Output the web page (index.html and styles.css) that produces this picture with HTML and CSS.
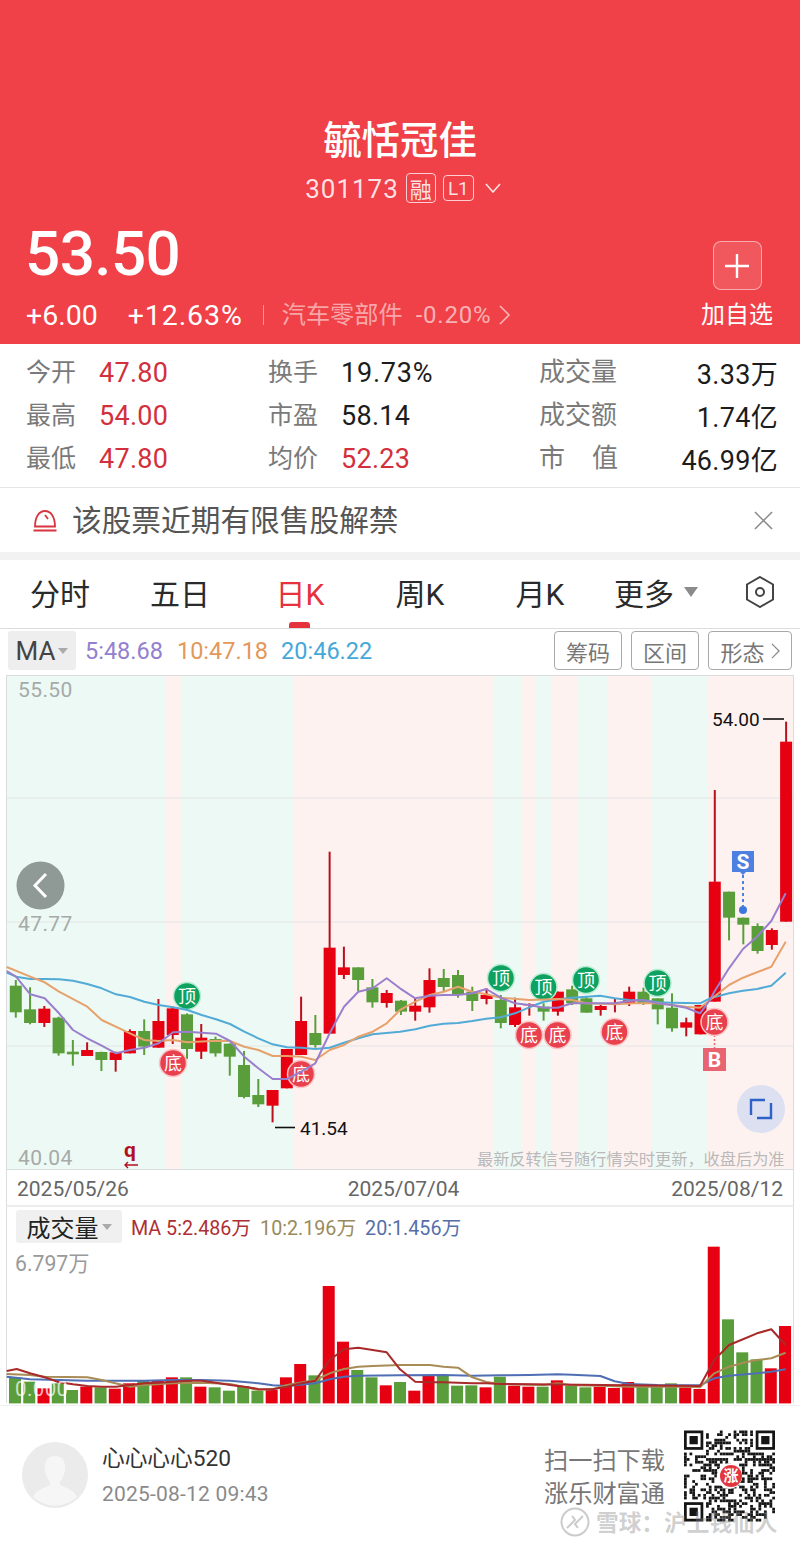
FILE: index.html
```html
<!DOCTYPE html>
<html lang="zh-CN">
<head>
<meta charset="utf-8">
<title>毓恬冠佳</title>
<link rel="stylesheet" href="styles.css">
</head>
<body>
<div class="page">
  <header class="header">
    <h1 class="title">毓恬冠佳</h1>
    <div class="code-row">
      <span class="code">301173</span>
      <span class="badge badge-tall">融</span>
      <span class="badge">L1</span>
      <svg class="code-chevron" viewBox="0 0 16 10"><path d="M1 1l7 8 7-8"/></svg>
    </div>
    <div class="quote">
      <div class="quote-main">
        <div class="price">53.50</div>
        <div class="change-row">
          <span class="change">+6.00</span>
          <span class="change change-pct">+12.63%</span>
          <span class="divider"></span>
          <span class="sector">汽车零部件</span>
          <span class="sector-pct">-0.20%</span>
          <svg class="sector-chevron" viewBox="0 0 12 20"><path d="M1 1l9 9-9 9"/></svg>
        </div>
      </div>
      <div class="watch">
        <div class="watch-btn"><svg viewBox="0 0 24 24"><path d="M12 0v24M0 12h24"/></svg></div>
        <div class="watch-label">加自选</div>
      </div>
    </div>
  </header>

  <section class="stats">
    <div class="stat stat-a"><span class="stat-label">今开</span><span class="stat-val up">47.80</span></div>
    <div class="stat stat-b"><span class="stat-label">换手</span><span class="stat-val stat-wide">19.73%</span></div>
    <div class="stat stat-c"><span class="stat-label">成交量</span><span class="stat-val">3.33万</span></div>
    <div class="stat stat-a"><span class="stat-label">最高</span><span class="stat-val up">54.00</span></div>
    <div class="stat stat-b"><span class="stat-label">市盈</span><span class="stat-val">58.14</span></div>
    <div class="stat stat-c"><span class="stat-label">成交额</span><span class="stat-val">1.74亿</span></div>
    <div class="stat stat-a"><span class="stat-label">最低</span><span class="stat-val up">47.80</span></div>
    <div class="stat stat-b"><span class="stat-label">均价</span><span class="stat-val up">52.23</span></div>
    <div class="stat stat-c"><span class="stat-label stat-spread"><span>市</span><span>值</span></span><span class="stat-val">46.99亿</span></div>
  </section>

  <section class="notice">
    <svg class="notice-icon" viewBox="0 0 24 24"><path d="M2 18.5C2 9 6 3 12 3s10 6 10 15.500zM12 7l3 4M0.500 22.500h23"/></svg>
    <span class="notice-text">该股票近期有限售股解禁</span>
    <svg class="notice-close" viewBox="0 0 20 20"><path d="M1 1l18 18M19 1L1 19"/></svg>
  </section>

  <nav class="tabs">
    <span class="tab">分时</span>
    <span class="tab">五日</span>
    <span class="tab tab-active">日K</span>
    <span class="tab">周K</span>
    <span class="tab">月K</span>
    <span class="tab tab-more">更多<i class="tab-caret"></i></span>
    <span class="tab"><svg class="hex" viewBox="0 0 30 32"><path d="M15 1l13 7.500v15L15 31 2 23.500v-15z"/><circle cx="15" cy="16" r="4"/></svg></span>
  </nav>

  <div class="ma-row">
    <span class="ma-select">MA<i class="caret"></i></span>
    <span class="ma ma5">5:48.68</span>
    <span class="ma ma10">10:47.18</span>
    <span class="ma ma20">20:46.22</span>
    <span class="ma-tools">
      <span class="tool">筹码</span>
      <span class="tool">区间</span>
      <span class="tool tool-wide">形态<svg class="tool-chevron" viewBox="0 0 10 18"><path d="M1 1l8 8-8 8"/></svg></span>
    </span>
  </div>

  <svg id="kline" class="kline" width="800" height="495" viewBox="0 0 800 495"></svg>

  <div class="dates"><span>2025/05/26</span><span class="date-mid">2025/07/04</span><span>2025/08/12</span></div>

  <section class="volume">
    <svg id="vol" class="vol-chart" width="800" height="198" viewBox="0 0 800 198"></svg>
    <div class="vol-head">
      <span class="vol-select">成交量<i class="caret"></i></span>
      <span class="vma vma5">MA 5:2.486万</span>
      <span class="vma vma10">10:2.196万</span>
      <span class="vma vma20">20:1.456万</span>
    </div>
    <div class="vol-max">6.797万</div>
    <div class="vol-min">0.000</div>
  </section>

  <footer class="footer">
    <svg class="avatar" viewBox="0 0 68 68">
      <circle class="avatar-bg" cx="34" cy="33" r="33"/>
      <path class="avatar-fg" d="M34 14c8 0 11 6 10 14-1 6-3 10-5 12v3c6 3 14 5 17 12A33 33 0 0 1 12 55c3-7 11-9 17-12v-3c-2-2-4-6-5-12-1-8 2-14 10-14z"/>
    </svg>
    <div class="user">
      <div class="user-name">心心心心520</div>
      <div class="user-time">2025-08-12 09:43</div>
    </div>
    <div class="download"><div>扫一扫下载</div><div>涨乐财富通</div></div>
    <div class="qr">
      <svg id="qr" class="qr-code" width="91" height="92" viewBox="0 0 33 33"></svg>
      <span class="qr-logo">涨</span>
    </div>
    <div class="watermark">
      <svg class="wm-logo" viewBox="0 0 30 30"><circle cx="15" cy="15" r="13.500"/><path d="M7 21l8-8-3-4M23 9l-8 8 3 4"/></svg>
      <span>雪球：沪上钱仙人</span>
    </div>
  </footer>
</div>
<script src="chart.js"></script>
</body>
</html>
```
FILE: styles.css
```css
* { box-sizing: border-box; }
html, body { margin: 0; padding: 0; background: #fff; }
body { font-family: Roboto, "Noto Sans CJK SC", sans-serif; color: #222; }
.page { width: 800px; height: 1547px; overflow: hidden; }

/* header */
.header { height: 344px; background: #ef4147; color: #fff; padding-top: 116px; }
.title { margin: 0; text-align: center; font-size: 38.4px; line-height: 50px; font-weight: 500; }
.code-row { display: flex; align-items: center; justify-content: center; height: 32px; margin-top: 6px; padding-left: 6px; }
.code { font-size: 26px; letter-spacing: 1px; color: rgba(255,255,255,.85); margin-right: 7px; padding-top: 2px; }
.badge { display: flex; align-items: center; justify-content: center; width: 31px; height: 26px; border: 1px solid rgba(255,255,255,.75); border-radius: 4px; font-size: 19px; color: rgba(255,255,255,.85); margin-right: 7px; }
.badge-tall { width: 30px; height: 30px; font-size: 22px; }
.code-chevron { width: 16px; height: 10px; margin-left: 4px; fill: none; stroke: rgba(255,255,255,.85); stroke-width: 1.6; }
.quote { display: flex; justify-content: space-between; align-items: flex-end; margin-top: 20px; padding: 0 27px 0 26px; }
.price { font-size: 62px; line-height: 60px; font-weight: 500; letter-spacing: -.6px; margin-left: -1px; }
.change-row { display: flex; align-items: center; height: 32px; margin-top: 15px; }
.change { font-size: 28.5px; margin-right: 30px; }
.change-pct { margin-right: 20px; letter-spacing: .9px; }
.divider { width: 1px; height: 20px; background: rgba(255,255,255,.45); margin-right: 18px; }
.sector { font-size: 24.2px; color: rgba(255,255,255,.55); margin-right: 13px; padding-bottom: 5px; }
.sector-pct { font-size: 24px; color: rgba(255,255,255,.6); margin-right: 8px; letter-spacing: .8px; }
.sector-chevron { width: 12px; height: 20px; fill: none; stroke: rgba(255,255,255,.6); stroke-width: 1.6; }
.watch { display: flex; flex-direction: column; align-items: center; width: 72px; }
.watch-btn { display: flex; align-items: center; justify-content: center; width: 49px; height: 49px; border: 1px solid rgba(255,255,255,.5); border-radius: 8px; background: rgba(255,255,255,.12); }
.watch-btn svg { width: 24px; height: 24px; fill: none; stroke: #fff; stroke-width: 2.4; }
.watch-label { font-size: 24px; line-height: 32px; margin-top: 9px; color: #fff; }

/* stats */
.stats { height: 144px; padding: 7px 22px 0 26px; display: grid; grid-template-columns: 242px 271px 1fr; grid-auto-rows: 43px; border-bottom: 1px solid #e4e4e4; }
.stat { display: flex; align-items: center; }
.stat-label { font-size: 25px; color: #7a7a7a; padding-bottom: 6px; }
.stat-val { font-size: 27px; color: #1c1c1c; letter-spacing: .3px; }
.stat-val.up { color: #d2303c; }
.stat-wide { letter-spacing: .8px; }
.stat-a .stat-label { width: 73px; }
.stat-b .stat-label { width: 73px; }
.stat-c { justify-content: space-between; }
.stat-c .stat-label { font-size: 26px; width: 79px; }
.stat-spread { display: flex; justify-content: space-between; }

/* notice */
.notice { display: flex; align-items: center; height: 72px; padding: 0 27px 0 33px; border-bottom: 8px solid #f2f2f2; }
.notice-icon { width: 24px; height: 24px; fill: none; stroke: #d9343f; stroke-width: 1.8; }
.notice-text { font-size: 29.7px; color: #555; margin-left: 15px; flex: 1; padding-bottom: 4px; }
.notice-close { width: 19px; height: 19px; fill: none; stroke: #888; stroke-width: 1.6; }

/* tabs */
.tabs { display: grid; grid-template-columns: repeat(6, 120px) 80px; height: 69px; border-bottom: 1px solid #ddd; }
.tab { position: relative; display: flex; align-items: center; justify-content: center; font-size: 30px; color: #2a2a2a; padding-bottom: 5px; }
.tab-more { padding-right: 8px; }
.tab-active { color: #e5323c; }
.tab-active::after { content: ""; position: absolute; left: 49px; bottom: 0; width: 21px; height: 6px; border-radius: 3px 3px 0 0; background: #e5323c; }
.tab-caret { width: 0; height: 0; margin-left: 10px; border: 7.500px solid transparent; border-top: 10px solid #8b8b8b; border-bottom: 0; }
.hex { width: 30px; height: 32px; fill: none; stroke: #444; stroke-width: 2; }

/* MA row */
.ma-row { display: flex; align-items: center; height: 46px; padding: 0 8px 3px; }
.ma-select { display: flex; align-items: center; justify-content: center; width: 68px; height: 39px; background: #eee; border-radius: 3px; font-size: 26px; color: #444; }
.caret { width: 0; height: 0; margin-left: 3px; border: 5px solid transparent; border-top: 6px solid #aaa; border-bottom: 0; }
.ma { font-size: 23.5px; margin-left: 9px; }
.ma10 { margin-left: 14px; }
.ma20 { margin-left: 13px; }
.ma5 { color: #9380cf; }
.ma10 { color: #e3985a; }
.ma20 { color: #45a8d8; }
.ma-tools { display: flex; gap: 9px; margin-left: auto; }
.tool { display: flex; align-items: center; justify-content: center; width: 68px; height: 39px; border: 1px solid #a9a9a9; border-radius: 4px; font-size: 22px; color: #777; }
.tool-wide { width: 84px; gap: 6px; }
.tool-chevron { width: 9px; height: 16px; fill: none; stroke: #888; stroke-width: 1.4; }

/* k-line chart */
.kline { display: block; }
.band-g { fill: #edf9f4; }
.band-r { fill: #fef2f1; }
.frame { stroke: #d9dddd; stroke-width: 1; fill: none; }
.grid { stroke: #e3e6e6; stroke-width: 1; }
.axis { font-size: 21px; fill: #a6aaa9; letter-spacing: .4px; }
.pt { font-size: 19px; fill: #111; }
.pt-line { stroke: #111; stroke-width: 1.6; }
.up-body { fill: #e60012; }
.up-wick { stroke: #b8101c; stroke-width: 2; }
.dn-body { fill: #5a9e3c; }
.dn-wick { stroke: #5a9e3c; stroke-width: 2; }
.line { fill: none; stroke-width: 2; stroke-linejoin: round; }
.l-ma5 { stroke: #9a80cc; }
.l-ma10 { stroke: #e6a26c; }
.l-ma20 { stroke: #52aad6; }
.v-ma5 { stroke: #a82a2a; }
.v-ma10 { stroke: #a88b55; }
.v-ma20 { stroke: #4f6eb4; }
.sig-top { fill: #0ea15f; stroke: #b6ecd2; stroke-width: 1.500; }
.sig-bot { fill: #e8404d; stroke: #fbc4c4; stroke-width: 1.500; }
.sig-text { font-size: 18px; fill: #fff; text-anchor: middle; }
.flag-b { fill: #e76470; }
.flag-s { fill: #4d80e0; }
.flag-text { font-size: 21px; font-weight: 700; fill: #fff; text-anchor: middle; }
.dash-b { stroke: #e76470; stroke-width: 1.500; stroke-dasharray: 2 2; }
.dash-s { stroke: #4d80e0; stroke-width: 2; stroke-dasharray: 3 3; }
.dot-s { fill: #3f78dc; }
.back-bg { fill: #8f9a97; }
.back-arrow { fill: none; stroke: #fff; stroke-width: 3; }
.full-bg { fill: #dde0f0; }
.full-icon { fill: none; stroke: #2f62c8; stroke-width: 2.4; }
.hint { font-size: 16.200px; fill: #b9b9b9; }
.mark { font-size: 21px; font-weight: 700; fill: #b01020; }
.mark-arrow { fill: none; stroke: #b01020; stroke-width: 1.400; }

/* dates */
.dates { display: flex; justify-content: space-between; align-items: center; height: 37px; margin: 0 6px; padding: 3px 10px 0 10px; font-size: 21px; color: #666; border-left: 1px solid #d9dddd; border-right: 1px solid #d9dddd; border-bottom: 2px solid #eceeee; }
.date-mid { margin-left: 7px; }

/* volume */
.volume { position: relative; height: 198px; }
.vol-chart { position: absolute; left: 0; top: 0; }
.vol-head { position: absolute; left: 16px; top: 3px; display: flex; align-items: center; }
.vol-select { display: flex; align-items: center; justify-content: center; width: 106px; height: 33px; background: #f0f0f0; border-radius: 3px; font-size: 24px; color: #222; }
.vma { font-size: 19.7px; margin-left: 9px; }
.vma5 { color: #ae2f33; margin-left: 9px; }
.vma10 { color: #9a8a5c; }
.vma20 { color: #5570a8; }
.vol-max { position: absolute; left: 15px; top: 39px; font-size: 21.200px; color: #9a9a9a; }
.vol-min { position: absolute; left: 15px; top: 170px; font-size: 20.500px; color: rgba(255,255,255,.72); letter-spacing: .4px; }

/* footer */
.footer { position: relative; display: flex; align-items: flex-start; height: 142px; border-top: 1px solid #efefef; padding: 36px 25px 0 21px; background: #fff; }
.avatar { width: 68px; height: 68px; flex: none; }
.avatar-bg { fill: #ebebeb; }
.avatar-fg { fill: #f6f6f6; }
.user { margin-left: 13px; padding-top: 1px; flex: 1; }
.user-name { font-size: 22.700px; line-height: 32px; color: #333; }
.user-time { font-size: 21px; line-height: 30px; margin-top: 4px; color: #8a8a8a; letter-spacing: .2px; }
.download { font-size: 24.200px; line-height: 33px; color: #777; margin-top: 3px; margin-right: 19px; }
.qr { position: relative; width: 91px; height: 92px; margin-top: -12px; }
.qr-code { display: block; }
.qr-cell { fill: #151515; }
.qr-clear { fill: #fff; }
.qr-logo { position: absolute; left: 36px; top: 35px; width: 22px; height: 22px; border-radius: 50%; background: #e2353f; color: #fff; font-size: 15px; line-height: 22px; text-align: center; font-weight: 700; }
.watermark { position: absolute; left: 560px; top: 99px; display: flex; align-items: center; gap: 6px; font-size: 22.700px; font-weight: 700; color: rgba(130,130,130,.38); white-space: nowrap; }
.wm-logo { width: 30px; height: 30px; fill: none; stroke: rgba(130,130,130,.42); stroke-width: 2; }
```
FILE: chart.js
```js
var NS = 'http://www.w3.org/2000/svg';
function el(parent, tag, attrs, text) {
  var n = document.createElementNS(NS, tag);
  for (var k in attrs) n.setAttribute(k, attrs[k]);
  if (text !== undefined) n.textContent = text;
  parent.appendChild(n);
  return n;
}
function polyline(parent, cls, a, b) {
  var pts = [];
  for (var i = 0; i < a.length; i += 2) pts.push((a[i] / 3).toFixed(1) + ',' + (a[i + 1] / 3).toFixed(1));
  for (var j = 0; j < b.length; j += 2) pts.push((400 + b[j] / 3).toFixed(1) + ',' + (b[j + 1] / 3).toFixed(1));
  el(parent, 'polyline', { 'class': 'line ' + cls, points: pts.join(' ') });
}

/* ---------- K line ---------- */
var k = document.getElementById('kline');
var bands = [[7,159,'g'],[166,15,'r'],[181,113,'g'],[294,199,'r'],[493,29,'g'],[522,14,'r'],[536,16,'g'],[552,26,'r'],[578,29,'g'],[607,44,'r'],[651,56,'g'],[707,86,'r']];
bands.forEach(function (b) { el(k, 'rect', { 'class': 'band-' + b[2], x: b[0], y: 0, width: b[1], height: 495 }); });
[123, 247, 371].forEach(function (y) { el(k, 'line', { 'class': 'grid', x1: 7, x2: 793, y1: y, y2: y }); });
el(k, 'rect', { 'class': 'frame', x: 6.5, y: 0.5, width: 787, height: 494 });

/* colour, wick top, body top, body bottom, wick bottom (3x chart coordinates) */
var candles = [
['g',915,932,1012,1028],['g',937,1003,1044,1048],['r',993,1001,1044,1056],['g',1025,1028,1135,1142],['g',1095,1130,1138,1172],
['r',1102,1125,1143,1143],['g',1130,1131,1155,1188],['r',1130,1132,1155,1190],['r',1063,1068,1135,1135],['g',1033,1068,1115,1140],
['r',972,1038,1118,1118],['r',995,1000,1080,1107],['g',1015,1018,1122,1152],['r',1047,1088,1130,1152],['g',1085,1092,1135,1145],
['g',1105,1106,1145,1202],['g',1128,1170,1266,1270],['g',1212,1260,1288,1296],['r',1245,1245,1292,1342],['r',1122,1122,1240,1240],
['r',965,1038,1140,1140],['g',1020,1074,1110,1118],['r',530,818,1076,1076],['r',815,877,900,912],['g',877,877,915,948],
['g',912,937,982,998],['r',945,954,984,998],['g',975,977,1010,1020],['r',970,992,1010,1037],['r',880,915,997,1013],
['g',882,909,936,948],['g',885,900,958,968],['g',935,950,978,1008],['r',940,960,972,988],['g',960,975,1044,1060],
['r',968,997,1050,1056],['r',985,988,991,1022],['g',985,995,1010,1037],['r',950,950,1010,1022],['g',932,943,985,990],
['g',965,970,1013,1013],['r',990,993,1005,1022],['r',972,985,988,1012],['r',935,950,985,993],['g',938,950,985,990],
['g',970,970,1003,1048],['g',955,998,1060,1070],['r',1028,1042,1058,1084],['r',990,990,1078,1078],['r',345,620,980,980],
['g',650,650,728,796],['g',728,728,749,808],['g',745,753,828,836],['r',760,765,810,824],['r',140,200,740,740]];
candles.forEach(function (c, i) {
  var x = 15.8 + 14.265 * i;
  var t = c[0] === 'r' ? 'up' : 'dn';
  el(k, 'line', { 'class': t + '-wick', x1: x, x2: x, y1: c[1] / 3, y2: c[4] / 3 });
  el(k, 'rect', { 'class': t + '-body', x: x - 6, y: c[2] / 3, width: 12, height: (c[3] - c[2]) / 3 });
});

/* signals sit under the moving-average lines */
el(k, 'line', { 'class': 'dash-b', x1: 714.5, x2: 714.5, y1: 360, y2: 374 });
[[187,321,'顶'],[501,303,'顶'],[543.500,312,'顶'],[586,305,'顶'],[657.500,308,'顶']].forEach(function (s) {
  el(k, 'circle', { 'class': 'sig-top', cx: s[0], cy: s[1], r: 13.5 });
  el(k, 'text', { 'class': 'sig-text', x: s[0], y: s[1] + 6.5 }, s[2]);
});
[[173,388,'底'],[301,399,'底'],[529,360,'底'],[557.500,360,'底'],[614.500,357,'底'],[714.500,347,'底']].forEach(function (s) {
  el(k, 'circle', { 'class': 'sig-bot', cx: s[0], cy: s[1], r: 13.5 });
  el(k, 'text', { 'class': 'sig-text', x: s[0], y: s[1] + 6.5 }, s[2]);
});

polyline(k, 'l-ma20',
  [20,893,48,905,91,912,134,912,177,913,219,917,262,927,305,940,348,958,390,966,433,980,476,990,519,997,562,1005,605,1020,648,1033,690,1047,733,1070,775,1090,818,1108,861,1117,904,1118,946,1122,989,1118,1032,1103,1075,1090,1118,1078],
  [0,1070,46,1063,89,1052,131,1046,174,1044,217,1038,259,1031,302,1027,345,1015,388,997,431,980,473,973,516,968,559,965,601,962,644,970,687,975,730,976,772,982,815,983,858,984,900,985,930,970,987,955,1029,947,1071,942,1114,932,1157,893]);
polyline(k, 'l-ma10',
  [20,876,91,905,134,922,177,950,262,995,305,1035,390,1075,433,1095,476,1098,519,1095,562,1102,648,1097,690,1098,733,1115,775,1125,818,1143,861,1143,904,1145,946,1155,989,1125,1032,1110,1075,1085,1118,1070,1160,1045],
  [0,1005,46,980,89,960,131,950,174,935,217,950,259,958,302,968,388,975,473,972,516,975,559,985,644,988,700,985,772,985,815,990,858,995,900,998,930,975,987,930,1029,908,1071,892,1114,875,1157,800]);
polyline(k, 'l-ma5',
  [20,888,48,905,91,958,134,970,177,1015,219,1065,262,1090,305,1112,348,1135,390,1125,433,1118,476,1105,519,1072,562,1070,605,1073,648,1076,690,1098,733,1145,775,1180,818,1212,861,1212,904,1190,946,1165,989,1075,1032,995,1075,950,1118,940,1160,910],
  [0,940,46,970,89,962,131,960,174,960,217,955,259,942,302,968,345,985,388,990,431,998,473,998,516,985,559,985,601,985,644,985,687,978,730,975,772,985,815,990,858,998,900,1015,930,975,943,950,987,880,1029,822,1071,785,1114,738,1157,655]);

[[18,22,'55.50'],[18,256,'47.77'],[18,490,'40.04']].forEach(function (a) {
  el(k, 'text', { 'class': 'axis', x: a[0], y: a[1] }, a[2]);
});

el(k, 'line', { 'class': 'pt-line', x1: 275, x2: 295, y1: 452.5, y2: 452.5 });
el(k, 'text', { 'class': 'pt', x: 300, y: 460 }, '41.54');
el(k, 'line', { 'class': 'pt-line', x1: 763, x2: 784, y1: 44, y2: 44 });
el(k, 'text', { 'class': 'pt', x: 712, y: 51 }, '54.00');

el(k, 'rect', { 'class': 'flag-b', x: 703, y: 373, width: 23, height: 23 });
el(k, 'text', { 'class': 'flag-text', x: 714.5, y: 392 }, 'B');
el(k, 'line', { 'class': 'dash-s', x1: 743, x2: 743, y1: 200, y2: 231 });
el(k, 'circle', { 'class': 'dot-s', cx: 743, cy: 235, r: 4 });
el(k, 'path', { 'class': 'flag-s', d: 'M732 176h22v21h-8l-3 3-3-3h-8z' });
el(k, 'text', { 'class': 'flag-text', x: 743, y: 194 }, 'S');

/* overlay buttons */
el(k, 'circle', { 'class': 'back-bg', cx: 40.5, cy: 210.5, r: 24 });
el(k, 'path', { 'class': 'back-arrow', d: 'M46 199l-11 11.500 11 11.500' });
el(k, 'circle', { 'class': 'full-bg', cx: 761, cy: 434, r: 24 });
el(k, 'path', { 'class': 'full-icon', d: 'M751 440v-15h14M771 428v15h-14' });

el(k, 'text', { 'class': 'hint', x: 477, y: 490 }, '最新反转信号随行情实时更新，收盘后为准');
el(k, 'text', { 'class': 'mark', x: 124, y: 482 }, 'q');
el(k, 'path', { 'class': 'mark-arrow', d: 'M138 490h-13m3-3l-3 3 3 3' });

/* ---------- volume ---------- */
var v = document.getElementById('vol');
var volCols = ['g','g','r','g','g','r','g','r','r','g','r','r','g','r','g','g','g','g','r','r','r','g','r','r','g','g','r','g','r','r','g','g','g','r','g','r','r','g','r','g','g','r','r','r','g','g','g','r','r','r','g','g','g','r','r'];
var tops = [622,635,655,640,660,650,652,656,640,632,632,622,622,650,652,662,648,662,660,622,582,616,348,515,600,622,646,636,662,618,618,647,646,652,620,647,650,650,631,648,652,650,654,636,650,650,640,652,657,230,448,547,568,595,468];
/* svg origin sits at y=1207; source values are measured from y=1170 at 3x */
var off = 37;
el(v, 'line', { 'class': 'frame', x1: 6.5, x2: 6.5, y1: 0, y2: 196 });
el(v, 'line', { 'class': 'frame', x1: 793.5, x2: 793.5, y1: 0, y2: 196 });
tops.forEach(function (t, i) {
  el(v, 'rect', { 'class': volCols[i] === 'r' ? 'up-body' : 'dn-body', x: 9 + 14.26 * i, y: t / 3 - off, width: 12, height: 233.4 - t / 3 });
});
function shift(a) { return a.map(function (n, i) { return i % 2 ? n - off * 3 : n; }); }
polyline(v, 'v-ma20',
  shift([20,620,90,628,177,630,262,632,348,632,433,632,519,630,605,630,690,632,775,640,818,646,861,648,946,640,989,628,1032,620,1075,617]),
  shift([0,616,131,615,217,617,302,616,388,615,473,613,516,614,601,618,644,634,687,642,772,645,858,646,900,646,943,625,987,617,1071,610,1114,605,1157,598]));
polyline(v, 'v-ma10',
  shift([20,612,90,615,134,620,262,622,305,630,390,650,433,645,519,640,605,638,690,642,775,660,818,658,861,645,946,630,989,610,1032,597,1075,590,1118,588]),
  shift([0,585,90,585,131,590,174,593,217,622,259,636,302,642,431,645,473,640,516,646,601,647,687,650,772,650,858,650,900,652,943,610,987,590,1029,578,1071,570,1114,565,1157,548]));
polyline(v, 'v-ma5',
  shift([20,603,50,597,90,610,134,622,177,637,219,643,262,648,305,650,348,650,390,645,433,640,476,638,519,635,562,632,605,632,648,638,690,645,733,650,775,657,818,658,861,650,904,640,946,632,989,570,1032,538,1075,533,1118,540,1160,547]),
  shift([0,598,46,635,89,637,131,637,174,638,217,640,259,640,302,642,900,648,943,570,987,525,1029,508,1071,490,1114,478,1157,525]));

/* ---------- QR ---------- */
var q = document.getElementById('qr');
var seed = 20250812;
function rnd() { seed = (seed * 1664525 + 1013904223) % 4294967296; return seed / 4294967296; }
function inFinder(x, y) { return (x < 8 && y < 8) || (x > 24 && y < 8) || (x < 8 && y > 24); }
for (var y = 0; y < 33; y++) {
  for (var x = 0; x < 33; x++) {
    if (!inFinder(x, y) && rnd() > 0.5) el(q, 'rect', { 'class': 'qr-cell', x: x, y: y, width: 1, height: 1 });
  }
}
[[0,0],[26,0],[0,26]].forEach(function (p) {
  el(q, 'rect', { 'class': 'qr-cell', x: p[0], y: p[1], width: 7, height: 7 });
  el(q, 'rect', { 'class': 'qr-clear', x: p[0] + 1, y: p[1] + 1, width: 5, height: 5 });
  el(q, 'rect', { 'class': 'qr-cell', x: p[0] + 2, y: p[1] + 2, width: 3, height: 3 });
});
el(q, 'circle', { 'class': 'qr-clear', cx: 16.5, cy: 16.5, r: 4.6 });
```
